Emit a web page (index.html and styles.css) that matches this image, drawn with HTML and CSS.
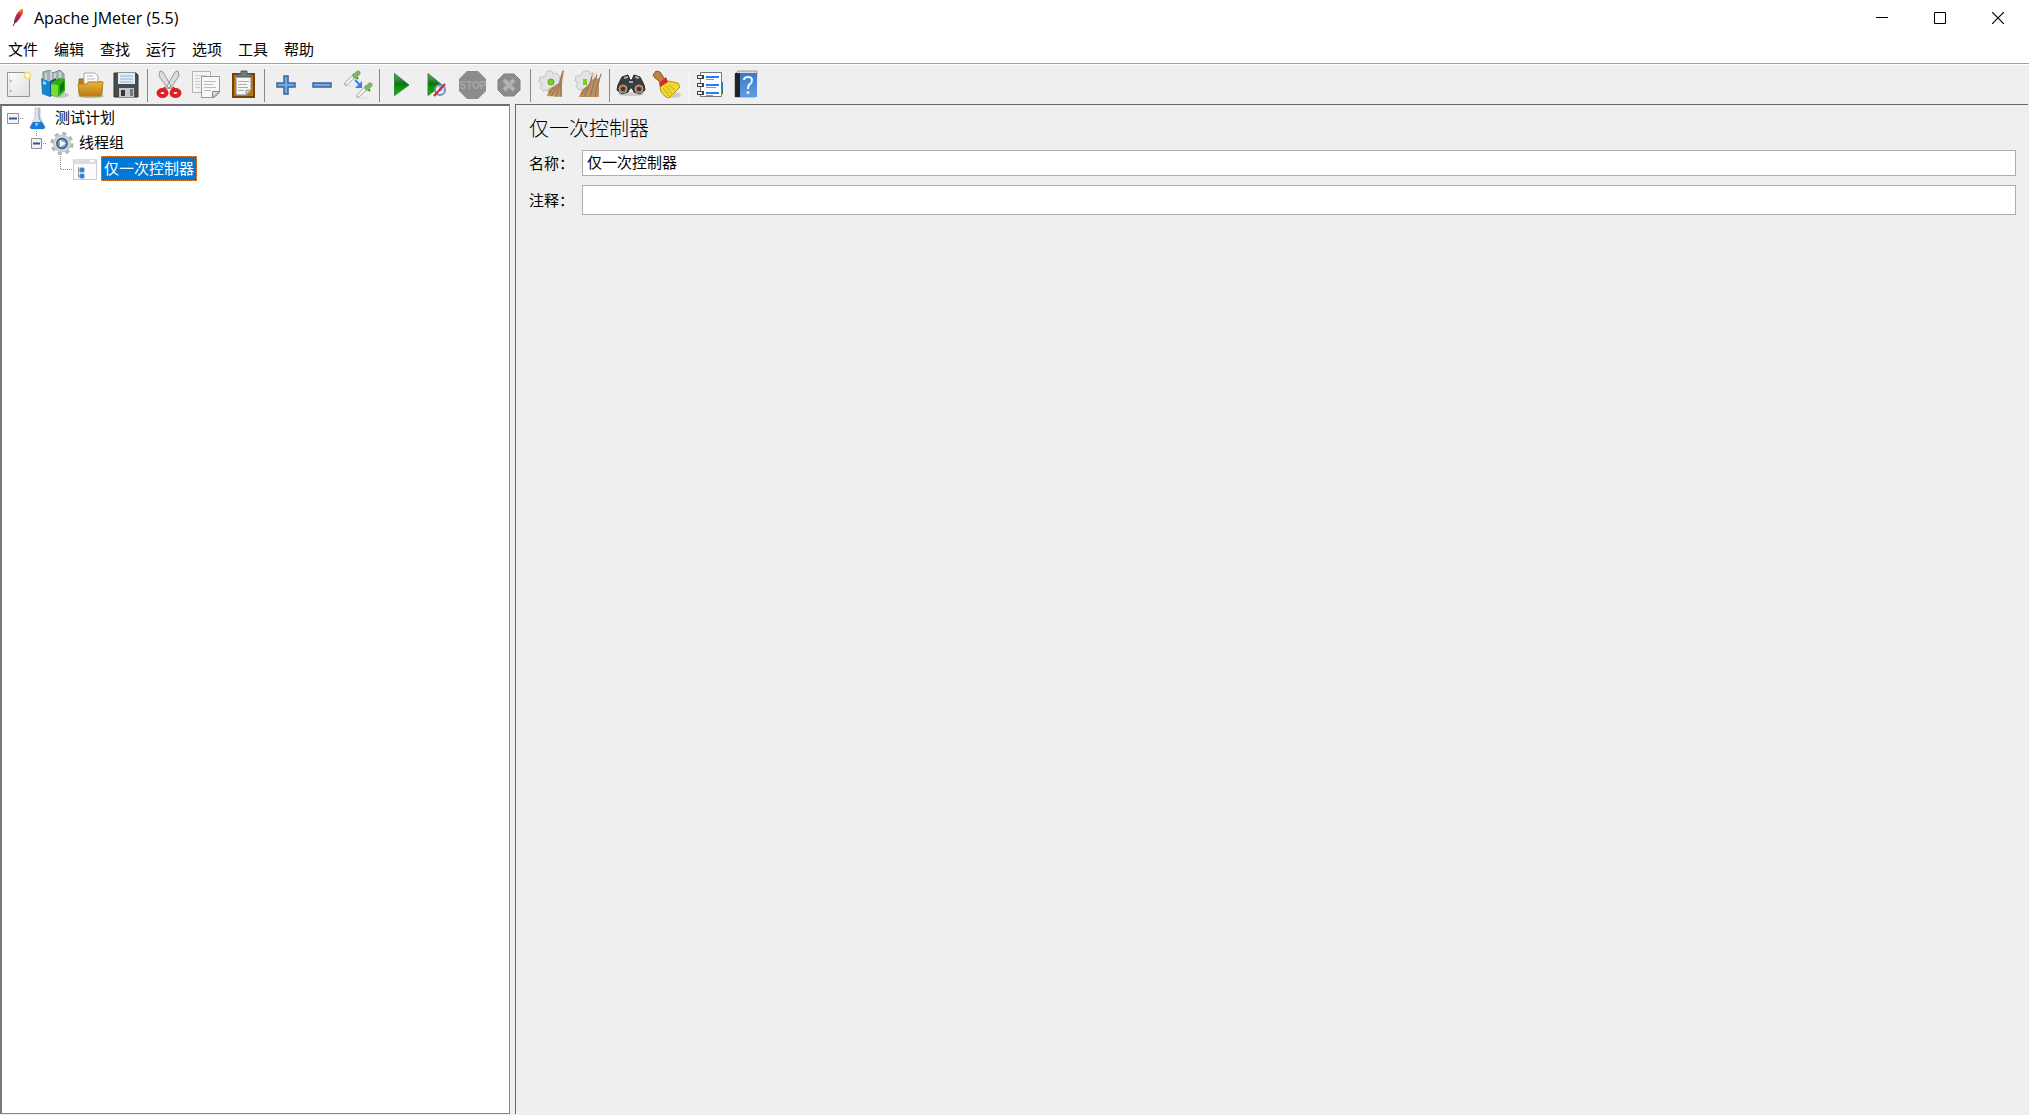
FILE: index.html
```html
<!DOCTYPE html>
<html lang="zh-CN">
<head>
<meta charset="utf-8">
<title>Apache JMeter (5.5)</title>
<link rel="stylesheet" href="styles.css">
</head>
<body>
<svg class="defs" aria-hidden="true">
  <defs>
    <linearGradient id="gold" x2="0" y2="1"><stop offset="0" stop-color="#e9b441"/><stop offset="1" stop-color="#bd7c10"/></linearGradient>
    <linearGradient id="play" x2="0" y2="1"><stop offset="0" stop-color="#69b069"/><stop offset=".48" stop-color="#116d16"/><stop offset=".55" stop-color="#009000"/><stop offset="1" stop-color="#10b810"/></linearGradient>
    <linearGradient id="feather" x2="0" y2="1"><stop offset="0" stop-color="#f69923"/><stop offset=".45" stop-color="#d6203c"/><stop offset="1" stop-color="#6d1f7f"/></linearGradient>
    <linearGradient id="straw" x2="0" y2="1"><stop offset="0" stop-color="#a98c6c"/><stop offset="1" stop-color="#c0935f"/></linearGradient>
    <linearGradient id="paper" x2="1" y2="1"><stop offset="0" stop-color="#fff"/><stop offset="1" stop-color="#dedede"/></linearGradient>
    <linearGradient id="book" x2="0" y2="1"><stop offset="0" stop-color="#3b78c4"/><stop offset="1" stop-color="#5f9ce6"/></linearGradient>
  </defs>
</svg>
<header class="titlebar">
  <svg class="logo" width="12" height="20" viewBox="0 0 12 20"><path d="M9 1l2 0 0 4-3 5-3 4-3 2 0-3 2-6 2-3z" fill="url(#feather)"/><path d="M8 5L4 13 2 16" stroke="#8a2b64" fill="none"/><path d="M2 16l-1 2" stroke="#5a2a78"/></svg>
  <h1 class="title">Apache JMeter (5.5)</h1>
  <div class="window-controls">
    <button type="button" aria-label="最小化"><svg width="12" height="12"><path d="M0 5.500h12" stroke="#000"/></svg></button>
    <button type="button" aria-label="最大化"><svg width="12" height="12"><path d="M.5.5h11v11H.5z" stroke="#000" fill="none"/></svg></button>
    <button type="button" aria-label="关闭"><svg width="12" height="12"><path d="M0 0l12 12M12 0L0 12" stroke="#000" stroke-width="1.200"/></svg></button>
  </div>
</header>
<nav class="menubar">
  <button type="button">文件</button>
  <button type="button">编辑</button>
  <button type="button">查找</button>
  <button type="button">运行</button>
  <button type="button">选项</button>
  <button type="button">工具</button>
  <button type="button">帮助</button>
</nav>
<div class="toolbar">
  <div class="group">
    <button type="button" aria-label="新建"><svg viewBox="0 0 30 30"><path d="M4.500 2.500h22v24h-22z" fill="url(#paper)" stroke="#969696"/><path d="M6.500 5v20" stroke="#ddd"/><path d="M8 10v2M8 20v2" stroke="#888"/><circle cx="24.500" cy="5.500" r="3" fill="#fffef0" stroke="#f2e27c" stroke-width="2"/></svg></button>
    <button type="button" aria-label="模板"><svg viewBox="0 0 30 30"><ellipse cx="21" cy="25" rx="9" ry="3" fill="#c4c4c4"/><path d="M4 2l7-2 3 3 7-3 4 4v9H4z" fill="#a3b1b5" stroke="#7d8b90"/><path d="M7 3v7M12 1v10M16 3v7M21 2v8" stroke="#eef4f5"/><path d="M2 8l9 4v15l-8-3z" fill="#1685cd"/><path d="M11 11l6-3v15l-6 4z" fill="#075796"/><path d="M4 11l3 1v3l-3-1z" fill="#9bd3f2"/><path d="M12 13l8-5 6 1v12l-7 6-7-2z" fill="#31ab12"/><path d="M12 14l7 1v12l-7-2z" fill="#75dc35"/><path d="M21 15l4-4v8l-4 4z" fill="#0b7610"/></svg></button>
    <button type="button" aria-label="打开"><svg viewBox="0 0 30 30"><ellipse cx="16" cy="26" rx="13" ry="2" fill="#bbb"/><path d="M4 9h8l2 3h13v12H4z" fill="#b77c19" stroke="#9c690f"/><path d="M9 3h11l3 3v14H9z" fill="#fafafa" stroke="#aaa"/><path d="M12 6h6M12 9h8M12 12h8" stroke="#bbb"/><path d="M3 14h8l3-2h14l-2 14H5z" fill="url(#gold)" stroke="#b9800f"/></svg></button>
    <button type="button" aria-label="保存"><svg viewBox="0 0 30 30"><path d="M3 3h22l2 2v22H3z" fill="#494b4e" stroke="#333"/><path d="M7 3h17v11H7z" fill="#e5edf5"/><path d="M9 6h13M9 9h13M9 12h13" stroke="#8eb6dc"/><path d="M8 18h15v9H8z" fill="#c6c8c9"/><path d="M10 20h4v6h-4z" fill="#35373a"/><path d="M19 19h3v7h-3z" fill="#777"/></svg></button>
  </div>
  <hr>
  <div class="group">
    <button type="button" aria-label="剪切"><svg viewBox="0 0 30 30"><path d="M6 1l3 1 8 14-3 3L5 6zM24 1l-3 1-8 14 3 3 9-13z" fill="#ddd" stroke="#999"/><path d="M12 18l-4 3M18 18l4 3" stroke="#d8232a" stroke-width="4"/><ellipse cx="8.500" cy="23" rx="4" ry="3" fill="#eee" stroke="#dc2028" stroke-width="4"/><ellipse cx="21.500" cy="23" rx="4" ry="3" fill="#eee" stroke="#dc2028" stroke-width="4"/></svg></button>
    <button type="button" aria-label="复制"><svg viewBox="0 0 30 30"><path d="M1.500 1.500h18v21h-18z" fill="#f3f3f3" stroke="#b4b4b4"/><path d="M4 5.500h11M4 8.500h5M4 11.500h5M4 14.500h5M4 17.500h5" stroke="#ccc"/><path d="M10.500 6.500h18v16l-5 5h-13z" fill="#f8f8f8" stroke="#999"/><path d="M13 11.500h12M13 14.500h10M13 17.500h12M13 20.500h7" stroke="#bbb"/><path d="M21.500 27.500v-6h7z" fill="#ddd" stroke="#888"/></svg></button>
    <button type="button" aria-label="粘贴"><svg viewBox="0 0 30 30"><path d="M5 4h21v23H5z" fill="#bd7410" stroke="#714507" stroke-width="2"/><path d="M8 6h15v15l-4 4H8z" fill="#f6f6f6" stroke="#888"/><path d="M10 11.500h11M10 14.500h9M10 17.500h10M10 20.500h6" stroke="#aaa"/><path d="M18 25v-5h5z" fill="#ccc" stroke="#999"/><path d="M9 7V4h4V1h6v3h4v3z" fill="#777b72" stroke="#555"/></svg></button>
  </div>
  <hr class="after-edit">
  <div class="group">
    <button type="button" aria-label="展开"><svg viewBox="0 0 30 30"><path d="M13 6h4v7h7v4h-7v7h-4v-7H6v-4h7z" fill="#78a8d8" stroke="#3465a4" stroke-width="1.500"/></svg></button>
    <button type="button" aria-label="折叠"><svg viewBox="0 0 30 30"><path d="M6 13h18v4H6z" fill="#78a8d8" stroke="#3465a4" stroke-width="1.500"/></svg></button>
    <button type="button" aria-label="切换"><svg viewBox="0 0 30 30"><path d="M2 16h12M14 28h12" stroke="#ddd"/><path d="M3 14l8-8M15 26l8-8" stroke="#b8b8b8" stroke-width="4" stroke-linecap="round"/><path d="M3 14l8-8M15 26l8-8" stroke="#fafafa" stroke-width="2"/><path d="M10 4l5 5M22 16l5 5" stroke="#527b43" stroke-width="2"/><path d="M12 6l3-3M24 18l3-3" stroke="#7cb566" stroke-width="5" stroke-linecap="round"/><path d="M12 10l6 6" stroke="#3282ee" stroke-width="2"/><path d="M19 11v7h-7z" fill="#3282ee"/></svg></button>
  </div>
  <hr class="before-run">
  <div class="group">
    <button type="button" aria-label="启动"><svg viewBox="0 0 30 30"><path d="M8.500 3.500L23 15 8.500 25.500z" fill="url(#play)" stroke="#35853a"/></svg></button>
    <button type="button" aria-label="不停顿启动"><svg viewBox="0 0 30 30"><path d="M6 3.500L20 15 6 25.500z" fill="url(#play)" stroke="#35853a"/><circle cx="18" cy="20" r="5" fill="#e9eff8" stroke="#6e92c2" stroke-width="2"/><path d="M18 16v4h3" stroke="#6e92c2" fill="none"/><path d="M12 26l11-12" stroke="#d62229" stroke-width="2"/></svg></button>
    <button type="button" aria-label="停止" disabled><svg viewBox="0 0 30 30"><path d="M9 1h11l8 8v12l-8 8H9l-8-8V9z" fill="#8c8c8c"/><text class="stop-text" x="15" y="19" text-anchor="middle">STOP</text></svg></button>
    <button type="button" aria-label="关闭" disabled><svg viewBox="0 0 30 30"><path d="M10 4h10l6 6v10l-6 6H10l-6-6V10z" fill="#8c8c8c" stroke="#808080"/><path d="M10 10l10 10M20 10L10 20" stroke="#b2b2b2" stroke-width="4"/></svg></button>
  </div>
  <hr class="after-run">
  <div class="group">
    <button type="button" aria-label="清除"><svg viewBox="0 0 30 30"><path d="M10 1h5l1 3 4-1 3 4-1 3v11l-4 2h-6l-1-3-5 1-3-4 2-3-3-2 1-5 4 0 2-3z" fill="#e2e3e3" stroke="#c4c4c4"/><path d="M27 0l-2 14v13l-15-1 2-7 10-6 3-12z" fill="url(#straw)"/><path d="M25 4l-3 12-3 11M21 15l-7 11M24 13v13M17 17l-5 7" stroke="#94734e" fill="none"/><circle cx="14" cy="12" r="3" fill="#79cf24" stroke="#5ba51c"/></svg></button>
    <button type="button" aria-label="清除全部"><svg viewBox="0 0 30 30"><path d="M11 1h5l1 3 3-1 2 4v13l-5 2h-5l-1-3-5 1-3-4 2-3-3-2 1-5 4 0 2-3z" fill="#e2e3e3" stroke="#c4c4c4"/><path d="M20 0l-1 10 4-3 1-6v8l4-2 1-7-3 14v13H6l3-7 8-7z" fill="url(#straw)"/><path d="M19 6l-3 10-5 11M24 5l-4 11-3 11M28 4l-4 12-2 11M14 17l-6 8" stroke="#94734e" fill="none"/><path d="M10 9h4v6h-4z" fill="#79cf24"/></svg></button>
  </div>
  <hr class="before-search">
  <div class="group">
    <button type="button" aria-label="搜索"><svg viewBox="0 0 30 30"><ellipse cx="15" cy="24" rx="13" ry="2" fill="#ccc"/><path d="M6 7l6-2 2 5h2l2-5 6 2 4 8 1 5-5 4-6-2-2-4h-2l-2 4-6 2-5-4 1-5z" fill="#393c3c" stroke="#222"/><path d="M8 8l4-1M19 7l4 1M13 12h4" stroke="#aaa" stroke-width="2"/><circle cx="7" cy="19" r="4" fill="#a66a43" stroke="#aaa"/><circle cx="23" cy="19" r="4" fill="#a66a43" stroke="#aaa"/><circle cx="7" cy="19" r="2" fill="#4d2c20"/><circle cx="23" cy="19" r="2" fill="#4d2c20"/></svg></button>
    <button type="button" aria-label="重置搜索"><svg viewBox="0 0 30 30"><ellipse cx="20" cy="25" rx="9" ry="3" fill="#ccc"/><path d="M1 5l3-4 4 1 4 6 1 3-4 3-3-4-3-2z" fill="#bb8441" stroke="#855924"/><path d="M8 17l8-6 10 2 2 4-11 11-3-1-5-5z" fill="#f0d833" stroke="#b59a0c"/><path d="M7 13l7-6 2 5-8 5z" fill="#d62c29"/><path d="M11 18l6 8M14 16l6 8M17 15l6 5" stroke="#c8ad17"/></svg></button>
  </div>
  <hr class="faint">
  <div class="group">
    <button type="button" aria-label="函数助手"><svg viewBox="0 0 30 30"><path d="M23 12h5v7h-5z" fill="#2476cf"/><path d="M23 19h5v5h-5z" fill="#138c18"/><path d="M5.500 2.500h21v24h-21z" fill="#fff" stroke="#777"/><path d="M2 7h7M2 15h7M2 23h7" stroke="#444" stroke-width="4"/><path d="M3 7h4M3 15h4M3 23h4" stroke="#eee" stroke-width="2"/><path d="M11 7h13M11 15h13M11 23h13" stroke="#267bff" stroke-width="2"/><path d="M11 9.500h8M11 17.500h10M11 25.500h7" stroke="#5d9ee8"/></svg></button>
    <button type="button" aria-label="帮助"><svg viewBox="0 0 30 30"><path d="M4 4l3-3h19v3l-2 23H4z" fill="#d9dce0" stroke="#999"/><path d="M4 3h5v24H4z" fill="#222"/><path d="M9 3h17v24H9z" fill="url(#book)"/><path d="M13 10q0-3 4-3t4 3q0 3-2 4t-2 5" stroke="#e8f2ff" stroke-width="2" fill="none"/><circle cx="17" cy="22.500" r="1.500" fill="#e8f2ff"/></svg></button>
  </div>
</div>
<main class="workspace">
  <aside class="tree-pane">
    <ul class="tree">
      <li class="row level-0">
        <button type="button" class="toggle" aria-label="折叠测试计划"><svg width="16" height="25"><path d="M.5 7.500h11v10H.5z" fill="#f4f4f4" stroke="#919191"/><path d="M2 12.500h8" stroke="#2c53a8" stroke-width="2"/><path d="M13 12.500h3" stroke="#888" stroke-dasharray="1 1"/></svg></button>
        <svg class="node" viewBox="0 0 24 25"><path d="M9 2h5v9l5 10q0 2-3 2H7q-3 0-3-2l5-10z" fill="#dfe3e9" stroke="#c6ccd5"/><path d="M13 2v10l3 6" stroke="#8d9aad" fill="none"/><path d="M7 16h9l3 5q0 2-3 2H7q-3 0-3-2z" fill="#1679d3"/><path d="M9 17h4l-3 4z" fill="#8ec6f5"/></svg>
        <span class="label">测试计划</span>
      </li>
      <li class="row level-1">
        <button type="button" class="toggle" aria-label="折叠线程组"><svg width="16" height="25"><path d="M5.500 0v6" stroke="#888" stroke-dasharray="1 1"/><path d="M.5 7.500h10v10H.5z" fill="#f4f4f4" stroke="#919191"/><path d="M2 12.500h7" stroke="#2c53a8" stroke-width="2"/><path d="M12 12.500h4" stroke="#888" stroke-dasharray="1 1"/></svg></button>
        <svg class="node" viewBox="0 0 24 25"><circle cx="12" cy="12.500" r="10" fill="none" stroke="#b4b4b4" stroke-width="3" stroke-dasharray="4.200 3.650"/><circle cx="12" cy="12.500" r="8" fill="#e4e4e4" stroke="#c9c9c9" stroke-width="2"/><circle cx="12" cy="12.500" r="5" fill="#83a7da" stroke="#4c628f" stroke-width="2"/><path d="M10 9l6 3.500-6 3.500z" fill="#fff"/></svg>
        <span class="label">线程组</span>
      </li>
      <li class="row level-2">
        <svg class="elbow" width="12" height="25"><path d="M.5 0v13.500H12" fill="none" stroke="#888" stroke-dasharray="1 1"/></svg>
        <svg class="node" viewBox="0 0 24 25"><path d="M.5 3.500h23v20H.5z" fill="#fcfcfc" stroke="#ccc"/><path d="M1 3h22v5H1z" fill="#ddd"/><path d="M17 5h4" stroke="#fff" stroke-width="2"/><path d="M5.500 11v10H8M5 14.500h3" fill="none" stroke="#999"/><path d="M7 12h4v4H7zM7 18h4v4H7z" fill="#2776cd" stroke="#5e9ae0"/></svg>
        <span class="label selected">仅一次控制器</span>
      </li>
    </ul>
  </aside>
  <section class="editor">
    <h2>仅一次控制器</h2>
    <form>
      <div class="field"><label for="name">名称：</label><input id="name" type="text" value="仅一次控制器"></div>
      <div class="field comment"><label for="comment">注释：</label><input id="comment" type="text"></div>
    </form>
  </section>
</main>
</body>
</html>
```
FILE: styles.css
```css
* { box-sizing: border-box; }

body {
  margin: 0;
  min-height: 100vh;
  display: flex;
  flex-direction: column;
  background: #fff;
  color: #000;
  font: 15px/24px "Noto Sans CJK SC", sans-serif;
}

button {
  margin: 0;
  padding: 0;
  border: 0;
  background: none;
  color: inherit;
  font: inherit;
}

svg { display: block; }
.defs { position: absolute; width: 0; height: 0; }

.titlebar {
  display: flex;
  align-items: center;
  height: 36px;
  padding: 0 2px 0 12px;
}

.title {
  margin: 0 auto 0 10px;
  font: 16px/20px "Open Sans", "Noto Sans", sans-serif;
}

.window-controls { display: flex; }
.window-controls button {
  width: 58px;
  height: 36px;
  display: grid;
  place-items: center;
}

.menubar {
  display: flex;
  gap: 16px;
  height: 28px;
  padding: 1px 8px 0;
  border-bottom: 1px solid #a0a0a0;
}
.menubar button { height: 24px; }

.toolbar {
  display: flex;
  height: 40px;
  border-top: 1px solid #fff;
  background: #efefef;
}
.group { display: flex; }
.group button {
  width: 36px;
  height: 39px;
  display: grid;
  place-items: center;
}
.group svg { width: 30px; height: 30px; }
.group:first-child,
.after-edit + .group,
.before-search + .group { gap: 0; }
.group:nth-of-type(2) { gap: 1px; }
.stop-text {
  font: bold 10px "Liberation Sans", sans-serif;
  fill: #a8a8a8;
}
.toolbar hr {
  width: 1px;
  height: 33px;
  margin: 4px 3px 0;
  border: 0;
  background: #8a8a8a;
}
.toolbar .faint { background: #f5f5f5; }

.workspace {
  flex: 1;
  display: grid;
  grid-template-columns: 510px 1fr;
  gap: 5px;
  padding: 0 1px 1px 0;
  background: #efefef;
}

.tree-pane {
  border: 1px solid #828790;
  border-top: 2px solid #6d6f74;
  border-left: 2px solid #77797e;
  background: #fff;
}
.tree {
  margin: 0;
  padding: 0;
  list-style: none;
}
.row {
  display: flex;
  align-items: center;
  height: 25px;
}
.level-0 { padding-left: 5px; }
.level-1 { padding-left: 29px; }
.level-2 { padding-left: 58px; }
.toggle { margin-right: 3px; }
.elbow { margin-right: 1px; }
.node { width: 24px; height: 25px; }
.label {
  margin-left: 3px;
  padding: 0 2px;
  line-height: 22px;
}
.row .label { height: 25px; }
.selected {
  margin-left: 4px;
  border: 1px dotted #ff8728;
  background: #0078d7;
  color: #fff;
}

.editor {
  padding: 9px 12px 0 13px;
  border-top: 1px solid #696969;
  border-left: 1px solid #696969;
}
.editor h2 {
  margin: 0 0 8px;
  font-size: 20px;
  font-weight: 300;
  line-height: 28px;
}
.field {
  display: flex;
  align-items: center;
  height: 26px;
  margin-bottom: 9px;
}
.comment { height: 30px; }
.field label { width: 53px; }
.field input {
  flex: 1;
  min-width: 0;
  height: 100%;
  padding: 0 4px 3px;
  border: 1px solid #abadb3;
  border-radius: 0;
  outline: 0;
  background: #fff;
  color: #000;
  font: inherit;
}
```
